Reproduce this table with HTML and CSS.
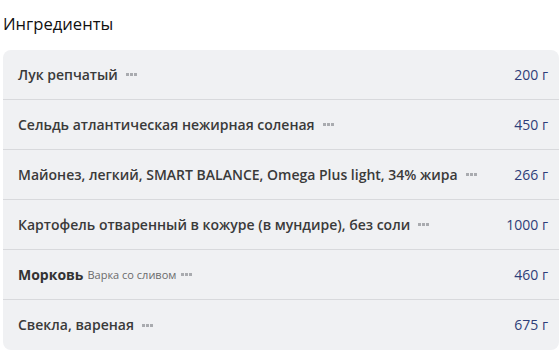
FILE: index.html
```html
<!DOCTYPE html>
<html lang="ru">
<head>
<meta charset="utf-8">
<link rel="stylesheet" href="styles.css">
</head>
<body>
<h2 class="title">Ингредиенты</h2>
<div class="card">
  <div class="row"><div class="name">Лук репчатый<span class="dots"><i></i><i></i><i></i></span></div><div class="amount">200 г</div></div>
  <div class="row"><div class="name">Сельдь атлантическая нежирная соленая<span class="dots"><i></i><i></i><i></i></span></div><div class="amount">450 г</div></div>
  <div class="row"><div class="name">Майонез, легкий, SMART BALANCE, Omega Plus light, 34% жира<span class="dots"><i></i><i></i><i></i></span></div><div class="amount">266 г</div></div>
  <div class="row"><div class="name">Картофель отваренный в кожуре (в мундире), без соли<span class="dots"><i></i><i></i><i></i></span></div><div class="amount">1000 г</div></div>
  <div class="row"><div class="name"><b class="strong">Морковь</b> <span class="note">Варка со сливом</span><span class="dots small"><i></i><i></i><i></i></span></div><div class="amount">460 г</div></div>
  <div class="row"><div class="name">Свекла, вареная<span class="dots"><i></i><i></i><i></i></span></div><div class="amount">675 г</div></div>
</div>
</body>
</html>
```
FILE: styles.css
```css
* { box-sizing: border-box; }
html, body { margin: 0; padding: 0; background: #fff; }
body {
  font-family: "Open Sans", "Noto Sans", sans-serif;
  color: #333;
  padding: 0 0 0 3px;
  width: 559px;
  overflow: hidden;
}
.title {
  margin: 0;
  padding-top: 13px;
  height: 50px;
  font-size: 16.6px;
  font-weight: 500;
  line-height: 22px;
  color: #111;
}
.card {
  background: #f0f1f3;
  border-radius: 8px;
  width: 556px;
}
.row {
  display: flex;
  align-items: center;
  justify-content: space-between;
  height: 50px;
  padding: 0 11px 0 15px;
  border-bottom: 1px solid #d8d9dc;
  font-size: 14px;
  line-height: 20px;
}
.row:last-child { border-bottom: none; }
.name { color: #3a3a3a; display: flex; align-items: center; font-weight: 600; }
.strong { font-weight: 700; color: #333; }
.note { font-size: 11px; font-weight: 400; color: #6b6b6b; margin-left: 4px; padding-top: 1px; }
.dots { display: inline-flex; gap: 1px; margin-left: 8px; }
.dots.small { margin-left: 5px; }
.dots i { width: 3px; height: 3px; background: #a9abaf; display: block; }
.amount { color: #2e3d78; white-space: nowrap; }
```
